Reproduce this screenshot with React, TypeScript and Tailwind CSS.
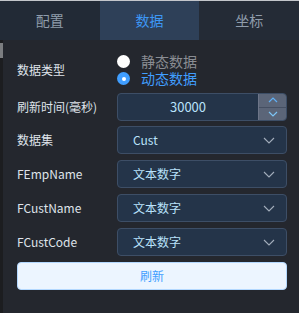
import React from "react";

const font = { fontFamily: '"Microsoft YaHei", "Noto Sans CJK SC", "Liberation Sans", sans-serif' };

function Chevron() {
  return (
    <svg width="12" height="7" viewBox="0 0 12 7" fill="none">
      <path d="M1 1L6 6L11 1" stroke="#a3adbb" strokeWidth="1.1" />
    </svg>
  );
}

function Select({ value }: { value: string }) {
  return (
    <div className="flex h-[28px] items-center justify-between rounded-[4px] border border-[#3d4e66] bg-[#243449] pl-[15px] pr-[11px]">
      <span className="text-[12px] text-[#b9e2fb]">{value}</span>
      <Chevron />
    </div>
  );
}

function Row({ label, children }: { label: string; children: React.ReactNode }) {
  return (
    <div className="flex items-center">
      <div className="w-[100px] text-[12px] text-[#dfe3ea]">{label}</div>
      <div className="flex-1">{children}</div>
    </div>
  );
}

export default function App() {
  return (
    <div className="flex h-[313px] w-[299px] flex-col bg-[#24272e]" style={font}>
      <div className="h-px bg-[#c3c6cb]" />
      <div className="grid h-[39px] grid-cols-3 text-[14px]">
        <div className="flex items-center justify-center bg-[#222a36] text-[#8f9cab]">配置</div>
        <div className="flex items-center justify-center bg-[#2e4058] text-[#3d97f5]">数据</div>
        <div className="flex items-center justify-center bg-[#242b36] text-[#8f9cab]">坐标</div>
      </div>
      <div className="flex flex-1">
        <div className="w-[3px] bg-[#1c1d20]">
          <div className="mt-[3px] h-[15px] bg-[#7b7d80]" />
        </div>
        <div className="flex flex-1 flex-col pl-[14px] pr-[12px]">
          <div className="mt-[13px]">
            <Row label="数据类型">
              <div className="flex flex-col">
                <div className="flex h-[17px] items-center">
                  <span className="h-[13px] w-[13px] rounded-full bg-white" />
                  <span className="ml-[11px] text-[14px] leading-[17px] text-[#8a8d93]">静态数据</span>
                </div>
                <div className="flex h-[17px] items-center">
                  <span className="flex h-[13px] w-[13px] items-center justify-center rounded-full bg-[#409eff]">
                    <span className="h-[4px] w-[4px] rounded-full bg-white" />
                  </span>
                  <span className="ml-[11px] text-[14px] leading-[17px] text-[#409eff]">动态数据</span>
                </div>
              </div>
            </Row>
          </div>
          <div className="mt-[6px]">
            <Row label="刷新时间(毫秒)">
              <div className="flex h-[28px] overflow-hidden rounded-[4px] border border-[#3d4e66] bg-[#243449]">
                <div className="flex flex-1 items-center justify-center text-[13px] text-[#b9e2fb]">30000</div>
                <div className="flex w-[28px] flex-col border-l border-[#6d7588] bg-[#5b6578]">
                  <div className="flex flex-1 items-center justify-center border-b border-[#454f62]">
                    <svg width="10" height="6" viewBox="0 0 10 6" fill="none">
                      <path d="M1 5L5 1L9 5" stroke="#5fb0f5" strokeWidth="1.2" />
                    </svg>
                  </div>
                  <div className="flex flex-1 items-center justify-center">
                    <svg width="10" height="6" viewBox="0 0 10 6" fill="none">
                      <path d="M1 1L5 5L9 1" stroke="#7cc4f5" strokeWidth="1.2" />
                    </svg>
                  </div>
                </div>
              </div>
            </Row>
          </div>
          <div className="mt-[5px] flex flex-col gap-[6px]">
            <Row label="数据集"><Select value="Cust" /></Row>
            <Row label="FEmpName"><Select value="文本数字" /></Row>
            <Row label="FCustName"><Select value="文本数字" /></Row>
            <Row label="FCustCode"><Select value="文本数字" /></Row>
            <button className="flex h-[28px] items-center justify-center rounded-[4px] border border-[#b3d8ff] bg-[#ecf5ff] text-[12px] text-[#409eff]">
              刷新
            </button>
          </div>
        </div>
      </div>
    </div>
  );
}
